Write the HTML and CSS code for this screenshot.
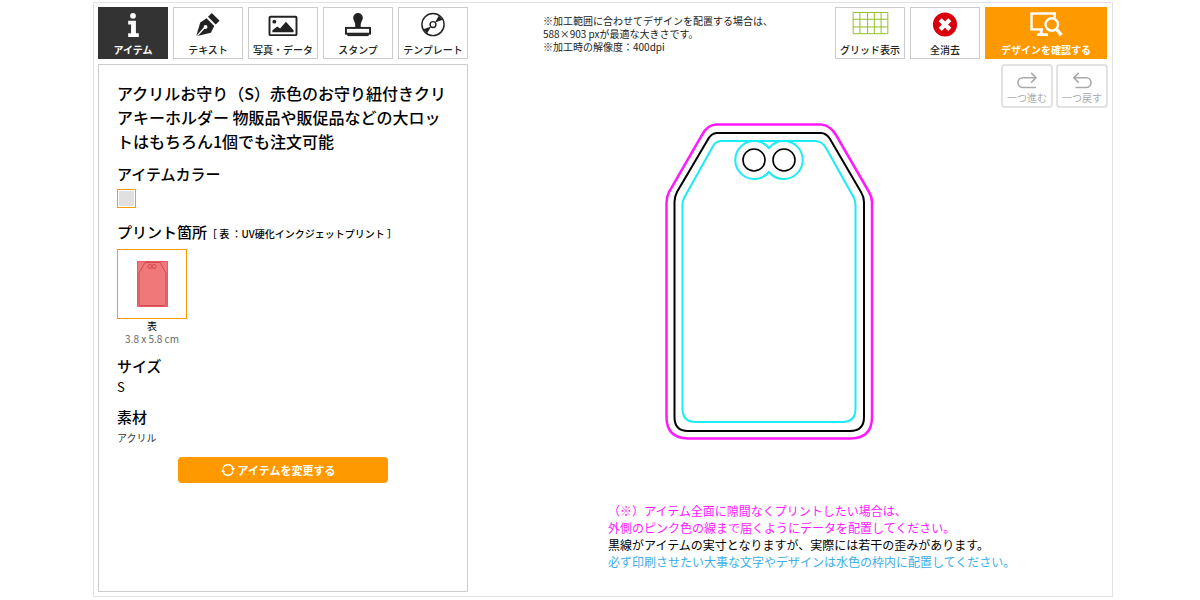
FILE: index.html
```html
<!DOCTYPE html>
<html lang="ja">
<head>
  <meta charset="UTF-8">
  <meta name="viewport" content="width=device-width, initial-scale=1">
  <title>デザインシミュレーター</title>
  <link rel="stylesheet" href="styles.css">
</head>
<body>

  <div class="simulator">

    <div class="side">
      <nav class="tools">
        <button type="button" class="tool active">
          <svg width="40" height="28" viewBox="0 0 40 28" fill="currentColor">
            <circle cx="20" cy="4" r="3"/>
            <path d="M15 9h8v13h3v4H15v-4h3v-9h-3z"/>
          </svg>
          <span>アイテム</span>
        </button>
        <button type="button" class="tool">
          <svg width="40" height="28" viewBox="0 0 40 28" fill="currentColor">
            <path d="M20 5l4-4 8 8-4 4z"/>
            <path d="M18.500 6.500l8 8-3.500 7L9 25l-1-1 4-13z"/>
            <path d="M9 24.500l7.500-8.500" stroke="#fff" stroke-width="1.500"/>
            <circle cx="17.500" cy="15.500" r="2" fill="#fff"/>
          </svg>
          <span>テキスト</span>
        </button>
        <button type="button" class="tool">
          <svg width="40" height="28" viewBox="0 0 40 28" fill="currentColor">
            <rect x="6" y="5" width="28" height="19" rx="1" fill="none" stroke="currentColor" stroke-width="2"/>
            <circle cx="11" cy="10" r="2"/>
            <path d="M9 21v-2l5-4 3 2 6-7 8 9v2z"/>
          </svg>
          <span>写真・データ</span>
        </button>
        <button type="button" class="tool">
          <svg width="40" height="28" viewBox="0 0 40 28" fill="currentColor">
            <path d="M20 1a5 5 0 0 1 5 5c0 3-3 5-2 10h-6c1-5-2-7-2-10a5 5 0 0 1 5-5z"/>
            <rect x="7.500" y="16.500" width="25" height="6" fill="none" stroke="currentColor" stroke-width="2"/>
            <path d="M9 23h22v2H9z"/>
          </svg>
          <span>スタンプ</span>
        </button>
        <button type="button" class="tool">
          <svg width="40" height="28" viewBox="0 0 40 28" fill="none" stroke="currentColor" stroke-width="1.500">
            <circle cx="20" cy="13" r="11.500"/>
            <circle cx="20" cy="13" r="3"/>
            <path d="M22 11L26 4l4 4zM18 15L14 22l-4-4z" fill="currentColor" stroke="none"/>
          </svg>
          <span>テンプレート</span>
        </button>
      </nav>

      <section class="panel">
        <h1>アクリルお守り（S）赤色のお守り紐付きクリアキーホルダー 物販品や販促品などの大ロットはもちろん1個でも注文可能</h1>

        <h2>アイテムカラー</h2>
        <button type="button" class="swatch" aria-label="クリア"></button>

        <h2>プリント箇所<small>［ 表 ：UV硬化インクジェットプリント ］</small></h2>
        <div class="print-area">
          <button type="button" class="thumb" aria-label="表">
            <svg width="31" height="46" viewBox="0 0 31 46">
              <rect width="31" height="46" fill="#f07878"/>
              <g fill="none" stroke="#cf4a50">
                <path d="M.5 .5h30v45H.5z" stroke="#ec5a60"/>
                <path d="M8 1.500h15L29 12v31q0 1.500-1.500 1.500h-24Q2 44.500 2 43V12z"/>
                <circle cx="13" cy="5.500" r="2"/>
                <circle cx="17" cy="5.500" r="2"/>
              </g>
            </svg>
          </button>
          <p class="face">表</p>
          <p class="dimension">3.8 x 5.8 cm</p>
        </div>

        <h2>サイズ</h2>
        <p class="size">S</p>

        <h2>素材</h2>
        <p class="material">アクリル</p>

        <button type="button" class="change">
          <svg width="14" height="14" viewBox="0 0 14 14" fill="none" stroke="currentColor">
            <path d="M2 5.500a5.200 5.200 0 0 1 10 0M12 8.500a5.200 5.200 0 0 1-10 0" stroke-width="1.300"/>
            <path d="M10 5h4l-2 3zM0 9h4L2 6z" fill="currentColor" stroke="none"/>
          </svg>
          アイテムを変更する
        </button>
      </section>
    </div>

    <main class="editor">
      <div class="editor-head">
        <p class="guide">
          ※加工範囲に合わせてデザインを配置する場合は、<br>
          588×903 pxが最適な大きさです。<br>
          ※加工時の解像度：400dpi
        </p>
        <div class="actions">
          <button type="button" class="tool">
            <svg width="40" height="28" viewBox="0 0 40 28" fill="none" stroke="#8fbe1e">
              <path d="M2.500 .5h36v22h-36zM9.500 .5v22M17.500 .5v22M24.500 .5v22M31.500 .5v22M2.500 7.500h36M2.500 15.500h36"/>
            </svg>
            <span>グリッド表示</span>
          </button>
          <button type="button" class="tool">
            <svg width="40" height="28" viewBox="0 0 40 28">
              <circle cx="20" cy="13" r="12.500" fill="#d9000d"/>
              <path d="M15 8l10 10M25 8l-10 10" stroke="#fff" stroke-width="4.500"/>
            </svg>
            <span>全消去</span>
          </button>
          <button type="button" class="tool confirm">
            <svg width="40" height="28" viewBox="0 0 40 28" fill="none" stroke="currentColor">
              <path d="M17 18H5V1.500h24V6" stroke-width="2.500"/>
              <path d="M15 18v4M11 23.500h11" stroke-width="3"/>
              <circle cx="26" cy="13" r="6.500" stroke-width="2.500"/>
              <path d="M31 18l5 6" stroke-width="3.500"/>
            </svg>
            <span>デザインを確認する</span>
          </button>
        </div>
      </div>

      <div class="history">
        <button type="button">
          <svg width="26" height="22" viewBox="0 0 26 22" fill="none" stroke="currentColor" stroke-width="2">
            <path d="M24 7H8a5.500 5.500 0 0 0 0 12h16M18 1l6 6-6 6"/>
          </svg>
          <span>一つ進む</span>
        </button>
        <button type="button">
          <svg width="26" height="22" viewBox="0 0 26 22" fill="none" stroke="currentColor" stroke-width="2">
            <path d="M3 7h15a5.500 5.500 0 0 1 0 12H5M9 1L3 7l6 6"/>
          </svg>
          <span>一つ戻す</span>
        </button>
      </div>

      <svg class="canvas" width="230" height="335" viewBox="0 0 230 335" fill="none" stroke-width="2">
        <!-- 塗り足し -->
        <path stroke="#ff19ff" stroke-width="2.500" d="M61 9.500H166Q175 10 181 20L214 77Q217 82 217 87V302Q217 323 196 323.500H33Q11.500 323 11.500 302V88Q11.500 82 14 77L47 20Q52 10 61 9.500Z"/>
        <!-- 仕上がり -->
        <path stroke="#000" d="M62 18H166Q171 18 175 24L206 77Q209 82 209 87V302Q209 316 195 316H33Q19.500 316 19.500 302V87Q19.500 82 22 77L52 26Q56 18 62 18Z"/>
        <!-- 安全範囲 -->
        <path stroke="#19ecf5" d="M66 26H160Q167 26 171 33L199 83Q200.500 86 200.500 90V294Q200.500 307 187 307H41Q27.500 307 27.500 294V90Q27.500 86 29 83L57 33Q60 26 66 26Z"/>
        <path stroke="#19ecf5" d="M114 33A19 19 0 1 0 114 57A19 19 0 1 0 114 33Z"/>
        <circle cx="99" cy="45" r="11" stroke="#000" stroke-width="1.600"/>
        <circle cx="129" cy="45" r="11" stroke="#000" stroke-width="1.600"/>
      </svg>

      <p class="caution">
        <span class="pink">（※）アイテム全面に隙間なくプリントしたい場合は、<br>外側のピンク色の線まで届くようにデータを配置してください。</span><br>
        黒線がアイテムの実寸となりますが、実際には若干の歪みがあります。<br>
        <span class="blue">必ず印刷させたい大事な文字やデザインは水色の枠内に配置してください。</span>
      </p>
    </main>

  </div>

</body>
</html>
```
FILE: styles.css
```css
* {
  box-sizing: border-box;
}

body {
  margin: 0;
  padding: 2px 87px 3px 93px;
  background: #fff;
  color: #000;
  font-family: "Noto Sans CJK JP", sans-serif;
}

h1, h2, p {
  margin: 0;
}

button {
  padding: 0;
  border: 1px solid #ccc;
  background: #fff;
  color: #222;
  font-family: inherit;
  cursor: pointer;
}

svg {
  display: block;
}

.simulator {
  display: grid;
  grid-template-columns: 370px minmax(0, 1fr);
  gap: 75px;
  min-height: calc(100vh - 5px);
  padding: 4px;
  border: 1px solid #e2e2e2;
}

.side {
  display: flex;
  flex-direction: column;
  gap: 5px;
}

.tools,
.actions {
  display: flex;
  gap: 5px;
}

.tool {
  display: flex;
  flex-direction: column;
  align-items: center;
  gap: 3px;
  width: 70px;
  height: 52px;
  padding-top: 4px;
  font-size: 10px;
  font-weight: 500;
  line-height: 16px;
  white-space: nowrap;
}

.tool.active {
  background: #333;
  border-color: #333;
  color: #fff;
  font-weight: bold;
}

.tool.confirm {
  width: 122px;
  background: #ff9900;
  border-color: #ff9900;
  color: #fff;
  font-weight: bold;
}

/* 左パネル */
.panel {
  flex: 1;
  padding: 16px 18px;
  border: 1px solid #ccc;
}

.panel h1 {
  font-size: 16px;
  font-weight: 500;
  line-height: 24px;
}

.panel h2 {
  margin-top: 9px;
  font-size: 15px;
  font-weight: 500;
  line-height: 24px;
}

.panel h2 small {
  font-size: 10px;
  line-height: 1;
}

.swatch {
  display: block;
  width: 19px;
  height: 19px;
  margin: 3px 0 12px;
  border-color: #ff9900;
  background: #e0e0e0;
  box-shadow: inset 0 0 0 1px #fff;
}

.print-area {
  width: 70px;
  margin-top: 5px;
  font-size: 10px;
  line-height: 13px;
  text-align: center;
}

.thumb {
  display: flex;
  align-items: center;
  justify-content: center;
  width: 70px;
  height: 70px;
  border-color: #ff9900;
}

.dimension {
  color: #666;
}

.size {
  font-size: 13px;
  line-height: 18px;
}

.material {
  color: #333;
  font-size: 10px;
  line-height: 18px;
}

.change {
  display: flex;
  align-items: center;
  justify-content: center;
  gap: 3px;
  width: 210px;
  height: 26px;
  margin: 10px auto 0;
  padding-right: 10px;
  border: none;
  border-radius: 4px;
  background: #ff9900;
  color: #fff;
  font-size: 11px;
  font-weight: bold;
}

/* 右側 */
.editor-head {
  display: flex;
  justify-content: space-between;
  margin-right: 1px;
}

.guide {
  padding-top: 7px;
  color: #222;
  font-size: 10px;
  line-height: 13px;
  white-space: nowrap;
}

.history {
  display: flex;
  justify-content: flex-end;
  gap: 3px;
  margin-top: 5px;
}

.history button {
  display: flex;
  flex-direction: column;
  align-items: center;
  width: 52px;
  height: 44px;
  padding-top: 6px;
  border: 2px solid #e2e2e2;
  border-radius: 4px;
  color: #aaa;
  font-size: 10px;
  line-height: 16px;
}

.canvas {
  margin: 7px 0 0 112px;
}

.caution {
  margin: 52px 0 0 65px;
  font-size: 12px;
  line-height: 17px;
  white-space: nowrap;
}

.pink {
  color: #ff19ff;
}

.blue {
  color: #3caee8;
}
```
